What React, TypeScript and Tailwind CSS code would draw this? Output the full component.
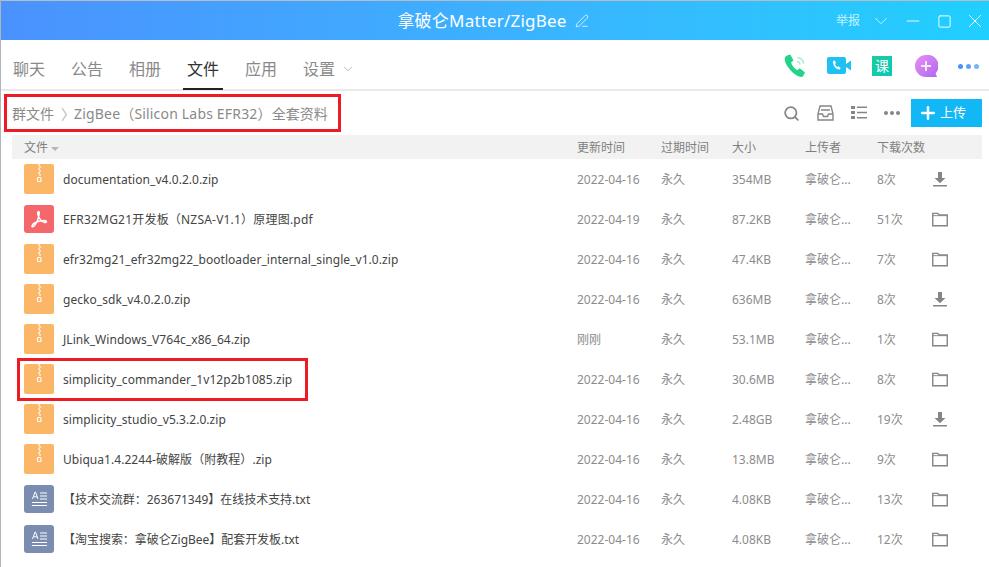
import React from "react";
import { ChevronDown, Minus, Search, Square, X, Plus, PenLine } from "lucide-react";

type FileKind = "zip" | "pdf" | "txt";
type FileAction = "download" | "folder";

interface FileRow {
  name: string;
  kind: FileKind;
  date: string;
  size: string;
  count: string;
  action: FileAction;
}

const files: FileRow[] = [
  { name: "documentation_v4.0.2.0.zip", kind: "zip", date: "2022-04-16", size: "354MB", count: "8次", action: "download" },
  { name: "EFR32MG21开发板（NZSA-V1.1）原理图.pdf", kind: "pdf", date: "2022-04-19", size: "87.2KB", count: "51次", action: "folder" },
  { name: "efr32mg21_efr32mg22_bootloader_internal_single_v1.0.zip", kind: "zip", date: "2022-04-16", size: "47.4KB", count: "7次", action: "folder" },
  { name: "gecko_sdk_v4.0.2.0.zip", kind: "zip", date: "2022-04-16", size: "636MB", count: "8次", action: "download" },
  { name: "JLink_Windows_V764c_x86_64.zip", kind: "zip", date: "刚刚", size: "53.1MB", count: "1次", action: "folder" },
  { name: "simplicity_commander_1v12p2b1085.zip", kind: "zip", date: "2022-04-16", size: "30.6MB", count: "8次", action: "folder" },
  { name: "simplicity_studio_v5.3.2.0.zip", kind: "zip", date: "2022-04-16", size: "2.48GB", count: "19次", action: "download" },
  { name: "Ubiqua1.4.2244-破解版（附教程）.zip", kind: "zip", date: "2022-04-16", size: "13.8MB", count: "9次", action: "folder" },
  { name: "【技术交流群：263671349】在线技术支持.txt", kind: "txt", date: "2022-04-16", size: "4.08KB", count: "13次", action: "folder" },
  { name: "【淘宝搜索：拿破仑ZigBee】配套开发板.txt", kind: "txt", date: "2022-04-16", size: "4.08KB", count: "12次", action: "folder" },
];

const tabs = ["聊天", "公告", "相册", "文件", "应用"];

const nameTracking: Record<FileKind, string> = {
  zip: "tracking-[0.05px]",
  pdf: "tracking-[0.2px]",
  txt: "tracking-[-0.03px]",
};

function ZipIcon() {
  return (
    <div className="relative h-[30px] w-[30px] rounded-[2px] bg-[#fbb668]">
      <svg width="30" height="30" viewBox="0 0 30 30" className="absolute left-0 top-0">
        <path d="M14 0h2v2h-2zM15 2h2v2h-2zM14 4h2v2h-2zM15 6h2v2h-2zM14 8h2v2h-2zM15 10h2v2h-2z" fill="#fde3c3" />
        <rect x="13.5" y="13.5" width="3.5" height="4" rx="1" fill="none" stroke="#fff" strokeWidth="1.2" />
      </svg>
    </div>
  );
}

function PdfIcon() {
  return (
    <div className="flex h-7 w-[30px] items-center justify-center rounded-[3px] bg-[#f4676b]">
      <svg width="20" height="20" viewBox="0 0 20 20" fill="none" stroke="#fff" strokeWidth="1.5">
        <path d="M9.5 2.5c-1.2 0-1 2.6.2 5.2 1.2 2.5 3 4.8 5.5 5.6 1.6.5 2.6-.2 2.1-1-.7-1-4.200-.9-7.300-.1-3.200.8-6.500 3-7 4.700-.3 1.100 1 1.200 2.100 0 1.800-1.900 4.300-7.400 5-11.600.3-1.800 0-2.800-.6-2.800z" />
      </svg>
    </div>
  );
}

function TxtIcon() {
  return (
    <div className="flex h-7 w-[30px] items-center justify-center rounded-[3px] bg-[#7b8cb1]">
      <svg width="20" height="18" viewBox="0 0 20 18" fill="none">
        <path d="M3.500 9 6 2h.500L9 9M4.500 6.800h3.500" stroke="#fff" strokeWidth="1" />
        <path d="M11 3h7M11 6h7M11 9h7M3 12.500h15M3 15.500h15" stroke="#fff" strokeWidth="1.200" />
      </svg>
    </div>
  );
}

function DownloadIcon() {
  return (
    <svg width="16" height="16" viewBox="0 0 16 16" fill="#85858a">
      <path d="M6 1h4v6h3.500L8 12.200 2.500 7H6z" />
      <rect x="1" y="14" width="14" height="1.500" />
    </svg>
  );
}

function FolderIcon() {
  return (
    <svg width="17" height="15" viewBox="0 0 17 15" fill="none" stroke="#85858a" strokeWidth="1.500">
      <path d="M.800 1h5.500l1.200 1.800h8.700v11.400H.800z" />
      <path d="M.800 3.400h15.400" strokeWidth="1" />
    </svg>
  );
}

function PhoneIcon() {
  return (
    <svg width="24" height="24" viewBox="0 0 24 24">
      <path d="M3 1.500 6.300.500l3.200 6-2.400 2c.8 2.800 3.200 6 6.300 7.700l2.300-1.900 5.300 4.300-2 3.700c-.7.800-2.200.9-4 .3C9.500 20.600 2 12.500.8 6.300.4 4 1.300 2.300 3 1.500z" fill="#22d38a" />
      <path d="M13 7.500c1.600.3 2.800 1.500 3.100 3.100M13.500 3.500c3.300.5 5.600 2.900 6.200 6.200" fill="none" stroke="#a6eec9" strokeWidth="1.500" />
    </svg>
  );
}

function VideoIcon() {
  return (
    <svg width="24" height="18" viewBox="0 0 24 18">
      <rect x="0" y="0" width="19" height="17" rx="2" fill="#1fc1f3" />
      <path d="M19 7l5-3.500v10L19 10z" fill="#1fc1f3" />
      <path d="M6 4l1.800-.6 1.200 2.600-1 1c.4 1.300 1.300 2.300 2.500 3l1-.8 2.200 1.800-1 1.500c-3.200.4-7-3.500-6.700-8.500z" fill="#fff" />
    </svg>
  );
}

function BubbleIcon() {
  return (
    <svg width="23" height="23" viewBox="0 0 23 23">
      <defs>
        <linearGradient id="bubble" x1="0" y1="0" x2="1" y2="1">
          <stop offset="0" stopColor="#e88ff3" />
          <stop offset="1" stopColor="#ae69ef" />
        </linearGradient>
      </defs>
      <path d="M11 0a11 11 0 1 0 0 22h10.500c.6 0 .7-.6.300-1-1-.8-1.300-1.800-.9-3A11 11 0 0 0 11 0z" fill="url(#bubble)" />
      <path d="M11 6v10M6 11h10" stroke="#f6e6fc" strokeWidth="2" />
    </svg>
  );
}

export default function App() {
  return (
    <div
      className="h-[567px] w-[989px] overflow-hidden border-l border-[#b4b4b8] bg-white text-[#8a8a8a]"
      style={{ fontFamily: '"Noto Sans", "Noto Sans CJK SC", sans-serif' }}
    >
      {/* title bar */}
      <div className="relative flex h-10 items-center justify-center border-t border-[#b9bcc0] bg-gradient-to-r from-[#4a92ff] to-[#1fcfff] pr-[4px]">
        <div className="flex items-center gap-2 text-[17px] tracking-[0.2px] text-white">
          <span>拿破仑Matter/ZigBee</span>
          <PenLine size={14} strokeWidth={1.300} />
        </div>
        <div className="absolute right-[3px] top-0 flex h-10 items-center text-[#c6f2ff]">
          <span className="mr-[10px] text-[12px]">举报</span>
          <ChevronDown size={22} strokeWidth={1} className="mr-[11px]" />
          <Minus size={20} strokeWidth={1.100} className="mr-[14px] text-white" />
          <Square size={15} strokeWidth={1.500} className="mr-[12px] text-white" />
          <X size={22} strokeWidth={1} className="text-white" />
        </div>
      </div>

      {/* tabs */}
      <div className="flex h-[51px] items-center justify-between border-b-2 border-[#e9e9e9] pl-3 pr-[10px]">
        <div className="flex h-full items-center gap-[26px] text-[16px]">
          {tabs.map((t) => (
            <div key={t} className={t === "文件" ? "relative flex h-full items-center text-[#333]" : "flex h-full items-center text-[#8a8a8a]"}>
              <span className="pt-[8px]">{t}</span>
              {t === "文件" && <div className="absolute -bottom-[1px] -left-1 -right-1 h-[2px] bg-[#222]" />}
            </div>
          ))}
          <div className="flex h-full items-center gap-[6px] pt-[8px]">
            <span>设置</span>
            <ChevronDown size={14} strokeWidth={1.200} className="text-[#999]" />
          </div>
        </div>
        <div className="flex items-center pt-[3px]">
          <PhoneIcon />
          <div className="ml-[19px]"><VideoIcon /></div>
          <div className="ml-[21px] flex h-5 w-5 items-center justify-center bg-gradient-to-br from-[#1ecb9a] to-[#06c9bb] text-[14px] leading-none text-white">课</div>
          <div className="ml-[23px] flex"><BubbleIcon /></div>
          <div className="ml-[20px] flex gap-[3px]">
            <span className="h-[5px] w-[5px] rounded-full bg-[#4a93f0]" />
            <span className="h-[5px] w-[5px] rounded-full bg-[#5ea3f2]" />
            <span className="h-[5px] w-[5px] rounded-full bg-[#79b5f5]" />
          </div>
        </div>
      </div>

      {/* breadcrumb and toolbar */}
      <div className="flex h-[44px] items-center justify-between pl-[11px] pr-[7px]">
        <div className="flex items-center text-[14px] text-[#8a8a8a]">
          <span>群文件</span>
          <span className="ml-[7px] -mr-[1px] text-[#b5b5b5]">〉</span>
          <span className="tracking-[0.18px]">ZigBee（Silicon Labs EFR32）</span>
          <span>全套资料</span>
        </div>
        <div className="flex items-center text-[#85858a]">
          <Search size={17} strokeWidth={2.500} />
          <svg width="17" height="16" viewBox="0 0 17 16" fill="none" stroke="#85858a" strokeWidth="1.400" className="ml-[17px]">
            <path d="M3 1h11l2 8v6H1V9z" />
            <path d="M1 9h4.500l1 2.500h4l1-2.500H16M4 5h9" />
          </svg>
          <svg width="16" height="14" viewBox="0 0 16 14" fill="#85858a" className="ml-[17px]">
            <path d="M0 0h4v3H0zM6 .500h10v1.500H6zM0 5h4v3H0zM6 5.700h10v1.500H6zM0 10h4v3H0zM6 11h10v1.500H6z" />
          </svg>
          <div className="ml-[17px] flex gap-[2px]">
            <span className="h-1 w-1 rounded-full bg-[#85858a]" />
            <span className="h-1 w-1 rounded-full bg-[#85858a]" />
            <span className="h-1 w-1 rounded-full bg-[#85858a]" />
          </div>
          <button className="ml-[11px] flex h-7 w-[71px] items-center justify-center gap-[2px] bg-[#12b7f5] pr-[9px] text-[13px] text-white">
            <Plus size={20} strokeWidth={3} />
            <span>上传</span>
          </button>
        </div>
      </div>

      {/* table */}
      <div className="ml-[11px] mr-[7px]">
        <div className="flex h-6 items-center bg-[#f2f2f2] pt-[2px] text-[12px] text-[#808080]">
          <div className="flex w-[565px] items-center gap-[3px] pl-3">
            <span>文件</span>
            <span className="mt-[2px] h-0 w-0 border-x-[4px] border-t-[4px] border-x-transparent border-t-[#b5b5b5]" />
          </div>
          <div className="w-[84px]">更新时间</div>
          <div className="w-[71px]">过期时间</div>
          <div className="w-[73px]">大小</div>
          <div className="w-[72px]">上传者</div>
          <div>下载次数</div>
        </div>
        {files.map((f) => (
          <div key={f.name} className="flex h-10 items-center text-[12px] text-[#8c8c8c]">
            <div className="flex w-[565px] items-center pl-3">
              <div className="flex w-[30px] items-center justify-center">
                {f.kind === "zip" && <ZipIcon />}
                {f.kind === "pdf" && <PdfIcon />}
                {f.kind === "txt" && <TxtIcon />}
              </div>
              <span className={`ml-[9px] pt-[2px] text-[12px] text-[#444] ${nameTracking[f.kind]}`}>{f.name}</span>
            </div>
            <div className="w-[84px] pt-[2px]">{f.date}</div>
            <div className="w-[71px] pt-[2px]">永久</div>
            <div className="w-[73px] pt-[2px]">{f.size}</div>
            <div className="w-[72px] pt-[2px]">拿破仑...</div>
            <div className="w-[55px] pt-[2px]">{f.count}</div>
            <div className="flex w-4 justify-center">
              {f.action === "download" ? <DownloadIcon /> : <FolderIcon />}
            </div>
          </div>
        ))}
      </div>

      {/* red annotation boxes */}
      <div className="absolute left-[4px] top-[94px] h-[38px] w-[337px] border-[3px] border-[#ed1c24]" />
      <div className="absolute left-[17px] top-[358px] h-[43px] w-[291px] border-[3px] border-[#ed1c24]" />
    </div>
  );
}
